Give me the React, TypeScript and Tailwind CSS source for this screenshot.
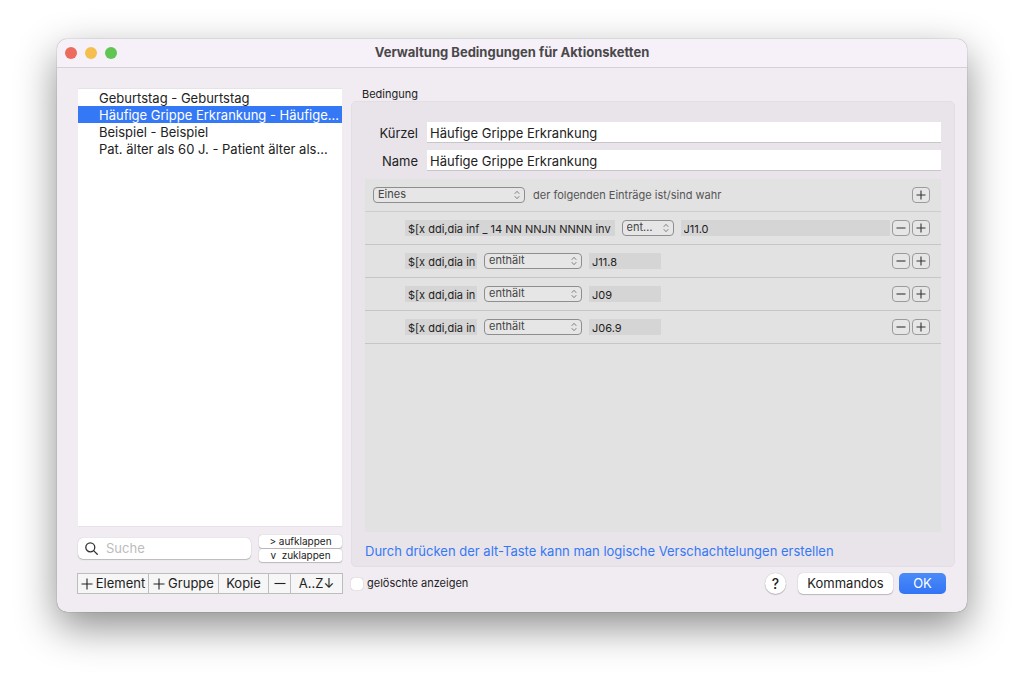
import { useState } from "react";

type Condition = { expression: string; value: string; wide?: boolean };

const entries = [
  "Geburtstag - Geburtstag",
  "Häufige Grippe Erkrankung - Häufige…",
  "Beispiel - Beispiel",
  "Pat. älter als 60 J. - Patient älter als…",
];

const conditions: Condition[] = [
  { expression: "$[x ddi,dia inf _ 14 NN NNJN NNNN inv", value: "J11.0", wide: true },
  { expression: "$[x ddi,dia in", value: "J11.8" },
  { expression: "$[x ddi,dia in", value: "J09" },
  { expression: "$[x ddi,dia in", value: "J06.9" },
];

function Popup({ label, options, className }: { label: string; options: string[]; className: string }) {
  return (
    <div className={`relative shrink-0 ${className}`}>
      <select
        aria-label={label}
        className="block h-4 w-full appearance-none truncate rounded-[4px] border border-[#8e8e8e] bg-[#e6e6e6] pr-4 pb-px pl-1 text-[11px] leading-[13px] text-[#444]"
      >
        {options.map((o) => (
          <option key={o}>{o}</option>
        ))}
      </select>
      <svg
        viewBox="0 0 6 10"
        className="pointer-events-none absolute top-[3px] right-[5px] h-[10px] w-[6px] fill-none stroke-[#808080]"
        strokeLinecap="round"
        strokeLinejoin="round"
      >
        <path d="M1 3.5 3 1.3l2 2.2M1 6.5l2 2.2 2-2.2" />
      </svg>
    </div>
  );
}

function RowButton({ kind }: { kind: "plus" | "minus" }) {
  return (
    <button
      aria-label={kind === "plus" ? "Zeile hinzufügen" : "Zeile entfernen"}
      className="flex h-4 w-[18px] shrink-0 items-center justify-center rounded-[4px] border border-[#9b9b9b] bg-[#e6e6e6]"
    >
      <svg viewBox="0 0 10 10" className="size-[10px] fill-none stroke-[#333]" strokeWidth="1.1">
        <path d={kind === "plus" ? "M.5 5h9M5 .5v9" : "M.5 5h9"} />
      </svg>
    </button>
  );
}

const fieldClass = "h-4 min-w-0 bg-[#d5d5d5] pt-[2px] pl-[3px] text-[11px] leading-[14px] text-[#222] outline-none";

function ConditionRow({ condition }: { condition: Condition }) {
  return (
    <div className="flex h-[33px] items-center border-b border-[#c6c6c8] pr-[11px] pl-10">
      <input
        aria-label="Ausdruck"
        defaultValue={condition.expression}
        className={`${fieldClass} ${condition.wide ? "flex-1" : "w-[72px]"}`}
      />
      <Popup
        label="Vergleich"
        options={["enthält", "ist", "ist nicht"]}
        className={condition.wide ? "mx-[7px] w-[52px]" : "mx-[7px] w-[98px]"}
      />
      <input
        aria-label="Wert"
        defaultValue={condition.value}
        className={`${fieldClass} ${condition.wide ? "flex-1" : "w-[72px]"}`}
      />
      <div className="ml-auto flex gap-[2px] pl-[2px]">
        <RowButton kind="minus" />
        <RowButton kind="plus" />
      </div>
    </div>
  );
}

function PlusIcon() {
  return (
    <svg viewBox="0 0 12 12" className="size-3 shrink-0 fill-none stroke-[#222]" strokeWidth="1.1">
      <path d="M.5 6h11M6 .5v11" />
    </svg>
  );
}

export default function App() {
  const [selected, setSelected] = useState(1);
  const toolButton = "flex items-center justify-center gap-[3px] whitespace-nowrap";

  return (
    <div className="min-h-screen bg-white px-[57px] pt-[39px] pb-[75px] font-['Inter','Liberation_Sans',sans-serif] text-[13px] text-[#222]">
      <main className="overflow-hidden rounded-[10px] bg-[#f1ecf2] shadow-[0_0_1px_rgba(0,0,0,0.6),0_15px_40px_rgba(0,0,0,0.45)]">
        <header className="grid h-[29px] grid-cols-[1fr_auto_1fr] items-center border-b border-[#d6d1d8] bg-[#f6f1f8]">
          <div className="flex gap-2 pl-2">
            <button aria-label="Schließen" className="size-3 rounded-full bg-[#ec6a5e]" />
            <button aria-label="Minimieren" className="size-3 rounded-full bg-[#f4bf4f]" />
            <button aria-label="Zoomen" className="size-3 rounded-full bg-[#61c554]" />
          </div>
          <h1 className="text-[13px] font-bold text-[#4a484b]">Verwaltung Bedingungen für Aktionsketten</h1>
        </header>

        <div className="grid grid-cols-[264px_minmax(0,1fr)] gap-[9px] pt-5 pr-3 pl-[21px]">
          <aside className="flex flex-col">
            <ul className="flex-1 border-y border-[#e6e2e7] bg-white">
              {entries.map((entry, i) => (
                <li key={entry}>
                  <button
                    onClick={() => setSelected(i)}
                    className={`block h-[17px] w-full overflow-hidden pl-[21px] text-left text-[13px] leading-[18px] whitespace-nowrap ${
                      i === selected ? "bg-[#3578f6] text-white" : ""
                    }`}
                  >
                    {entry}
                  </button>
                </li>
              ))}
            </ul>
            <div className="flex items-center gap-2 pt-2 pb-[5px]">
              <label className="flex h-[21px] flex-1 items-center gap-2 rounded-[5px] bg-white pl-[7px] shadow-[0_0_1px_rgba(0,0,0,0.25),0_1px_1px_rgba(0,0,0,0.2)]">
                <svg viewBox="0 0 13 13" className="size-[13px] shrink-0 fill-none stroke-[#333]" strokeWidth="1.3" strokeLinecap="round">
                  <circle cx="5.3" cy="5.3" r="4.5" />
                  <path d="m8.6 8.6 3.7 3.7" />
                </svg>
                <input
                  aria-label="Suche"
                  placeholder="Suche"
                  className="w-full min-w-0 bg-transparent text-[13px] outline-none placeholder:text-[#bcbcbc]"
                />
              </label>
              <div className="flex w-[83px] flex-col gap-px text-[10px] leading-[13px]">
                <button className="h-[13px] rounded-[3px] bg-white shadow-[0_0_1px_rgba(0,0,0,0.3),0_1px_1px_rgba(0,0,0,0.2)]">
                  &gt; aufklappen
                </button>
                <button className="h-[13px] rounded-[3px] bg-white whitespace-pre shadow-[0_0_1px_rgba(0,0,0,0.3),0_1px_1px_rgba(0,0,0,0.2)]">
                  {"v  zuklappen"}
                </button>
              </div>
            </div>
          </aside>

          <section aria-labelledby="group-title">
            <h2 id="group-title" className="pl-[11px] text-[11px] leading-[13px] font-normal">
              Bedingung
            </h2>
            <div className="rounded-[5px] border border-[#e3dee5] bg-[#e8e4ea] px-[13px] pt-5 pb-1.5">
              <div className="grid grid-cols-[53px_minmax(0,1fr)] items-center gap-x-[9px] gap-y-[7px] text-right">
                <label htmlFor="kuerzel" className="pt-[2px] leading-[19px]">
                  Kürzel
                </label>
                <input
                  id="kuerzel"
                  defaultValue="Häufige Grippe Erkrankung"
                  className="h-[21px] border-b border-[#c9c6ca] bg-white pt-[2px] pl-[3px] outline-none"
                />
                <label htmlFor="name" className="pt-[2px] leading-[19px]">
                  Name
                </label>
                <input
                  id="name"
                  defaultValue="Häufige Grippe Erkrankung"
                  className="h-[21px] border-b border-[#c9c6ca] bg-white pt-[2px] pl-[3px] outline-none"
                />
              </div>

              <div className="mt-2 min-h-[353px] bg-[#e2e2e2]">
                <div className="flex h-[33px] items-center border-b border-[#cdcdcf] pr-[11px] pl-2">
                  <Popup label="Verknüpfung" options={["Eines", "Alle", "Keines"]} className="w-[152px]" />
                  <span className="pl-2 text-[11px] text-[#555]">der folgenden Einträge ist/sind wahr</span>
                  <div className="ml-auto">
                    <RowButton kind="plus" />
                  </div>
                </div>
                {conditions.map((c) => (
                  <ConditionRow key={c.value} condition={c} />
                ))}
              </div>

              <p className="pt-[10px] leading-[18px] text-[#3578f6]">
                Durch drücken der alt-Taste kann man logische Verschachtelungen erstellen
              </p>
            </div>
          </section>
        </div>

        <footer className="flex items-center pt-[6px] pr-[21px] pb-[18px] pl-5">
          <div className="flex h-[21px] w-[266px] divide-x divide-[#bdbdbd] border border-[#bdbdbd] bg-[#f6f6f6]">
            <button className={`${toolButton} w-[71px]`}>
              <PlusIcon />
              Element
            </button>
            <button className={`${toolButton} w-[70px]`}>
              <PlusIcon />
              Gruppe
            </button>
            <button className={`${toolButton} w-[50px]`}>Kopie</button>
            <button aria-label="Entfernen" className={`${toolButton} w-[22px]`}>
              <svg viewBox="0 0 12 12" className="size-3 fill-none stroke-[#222]" strokeWidth="1.1">
                <path d="M.5 5.5h11" />
              </svg>
            </button>
            <button className={`${toolButton} flex-1`}>A..Z↓</button>
          </div>
          <label className="ml-2 flex items-center gap-1 text-[11px]">
            <input
              type="checkbox"
              className="size-3 appearance-none rounded-[3px] bg-white shadow-[0_0_1px_rgba(0,0,0,0.4)] checked:bg-[#3578f6]"
            />
            gelöschte anzeigen
          </label>
          <div className="ml-auto flex items-center">
            <button
              aria-label="Hilfe"
              className="mr-3 size-[21px] rounded-full bg-white text-[14px] leading-[21px] font-medium shadow-[0_0_1px_rgba(0,0,0,0.3),0_1px_1px_rgba(0,0,0,0.2)]"
            >
              ?
            </button>
            <button className="mr-[6px] h-[21px] w-[95px] rounded-[5px] bg-white shadow-[0_0_1px_rgba(0,0,0,0.3),0_1px_1px_rgba(0,0,0,0.2)]">
              Kommandos
            </button>
            <button className="h-[21px] w-[47px] rounded-[5px] bg-linear-to-b from-[#4b8bf8] to-[#3274f5] text-white">OK</button>
          </div>
        </footer>
      </main>
    </div>
  );
}
